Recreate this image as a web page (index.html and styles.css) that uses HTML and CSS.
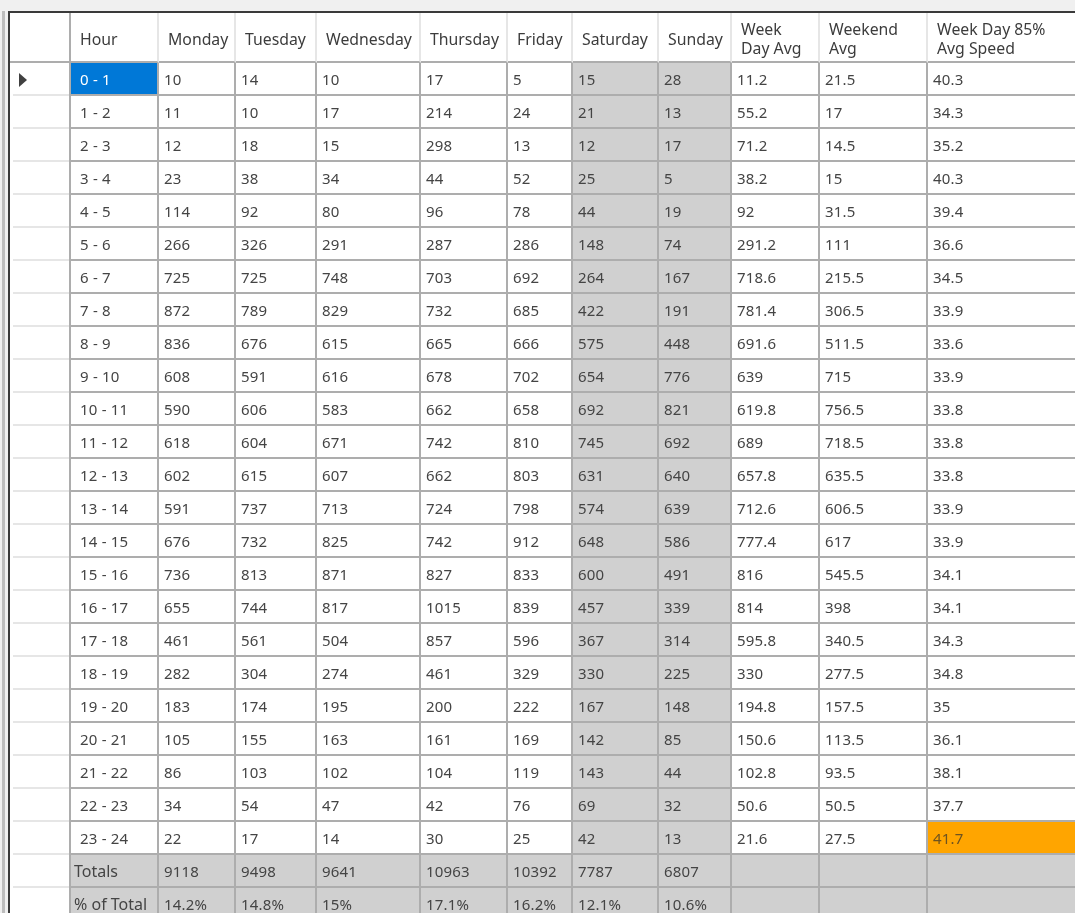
FILE: index.html
```html
<!DOCTYPE html>
<html lang="en">
<head>
<meta charset="utf-8">
<title>Hourly traffic counts</title>
<link rel="stylesheet" href="styles.css">
</head>
<body>
<div class="frame">
<table class="grid">
<colgroup><col class="c0"><col class="c1"><col class="c2"><col class="c3"><col class="c4"><col class="c5"><col class="c6"><col class="c7"><col class="c8"><col class="c9"><col class="c10"><col class="c11"></colgroup>
<thead>
<tr><th class="rh"></th><th class="one">Hour</th><th class="one">Monday</th><th class="one">Tuesday</th><th class="one">Wednesday</th><th class="one">Thursday</th><th class="one">Friday</th><th class="one">Saturday</th><th class="one">Sunday</th><th>Week<br>Day Avg</th><th>Weekend<br>Avg</th><th>Week Day 85%<br>Avg Speed</th></tr>
</thead>
<tbody>
<tr><td class="rh"><svg class="arrow" width="8" height="14" viewBox="0 0 8 14"><path d="M0 0L8 7L0 14Z"/></svg></td><td class="h sel">0 - 1</td><td>10</td><td>14</td><td>10</td><td>17</td><td>5</td><td class="g">15</td><td class="g">28</td><td>11.2</td><td>21.5</td><td>40.3</td></tr>
<tr><td class="rh"></td><td class="h">1 - 2</td><td>11</td><td>10</td><td>17</td><td>214</td><td>24</td><td class="g">21</td><td class="g">13</td><td>55.2</td><td>17</td><td>34.3</td></tr>
<tr><td class="rh"></td><td class="h">2 - 3</td><td>12</td><td>18</td><td>15</td><td>298</td><td>13</td><td class="g">12</td><td class="g">17</td><td>71.2</td><td>14.5</td><td>35.2</td></tr>
<tr><td class="rh"></td><td class="h">3 - 4</td><td>23</td><td>38</td><td>34</td><td>44</td><td>52</td><td class="g">25</td><td class="g">5</td><td>38.2</td><td>15</td><td>40.3</td></tr>
<tr><td class="rh"></td><td class="h">4 - 5</td><td>114</td><td>92</td><td>80</td><td>96</td><td>78</td><td class="g">44</td><td class="g">19</td><td>92</td><td>31.5</td><td>39.4</td></tr>
<tr><td class="rh"></td><td class="h">5 - 6</td><td>266</td><td>326</td><td>291</td><td>287</td><td>286</td><td class="g">148</td><td class="g">74</td><td>291.2</td><td>111</td><td>36.6</td></tr>
<tr><td class="rh"></td><td class="h">6 - 7</td><td>725</td><td>725</td><td>748</td><td>703</td><td>692</td><td class="g">264</td><td class="g">167</td><td>718.6</td><td>215.5</td><td>34.5</td></tr>
<tr><td class="rh"></td><td class="h">7 - 8</td><td>872</td><td>789</td><td>829</td><td>732</td><td>685</td><td class="g">422</td><td class="g">191</td><td>781.4</td><td>306.5</td><td>33.9</td></tr>
<tr><td class="rh"></td><td class="h">8 - 9</td><td>836</td><td>676</td><td>615</td><td>665</td><td>666</td><td class="g">575</td><td class="g">448</td><td>691.6</td><td>511.5</td><td>33.6</td></tr>
<tr><td class="rh"></td><td class="h">9 - 10</td><td>608</td><td>591</td><td>616</td><td>678</td><td>702</td><td class="g">654</td><td class="g">776</td><td>639</td><td>715</td><td>33.9</td></tr>
<tr><td class="rh"></td><td class="h">10 - 11</td><td>590</td><td>606</td><td>583</td><td>662</td><td>658</td><td class="g">692</td><td class="g">821</td><td>619.8</td><td>756.5</td><td>33.8</td></tr>
<tr><td class="rh"></td><td class="h">11 - 12</td><td>618</td><td>604</td><td>671</td><td>742</td><td>810</td><td class="g">745</td><td class="g">692</td><td>689</td><td>718.5</td><td>33.8</td></tr>
<tr><td class="rh"></td><td class="h">12 - 13</td><td>602</td><td>615</td><td>607</td><td>662</td><td>803</td><td class="g">631</td><td class="g">640</td><td>657.8</td><td>635.5</td><td>33.8</td></tr>
<tr><td class="rh"></td><td class="h">13 - 14</td><td>591</td><td>737</td><td>713</td><td>724</td><td>798</td><td class="g">574</td><td class="g">639</td><td>712.6</td><td>606.5</td><td>33.9</td></tr>
<tr><td class="rh"></td><td class="h">14 - 15</td><td>676</td><td>732</td><td>825</td><td>742</td><td>912</td><td class="g">648</td><td class="g">586</td><td>777.4</td><td>617</td><td>33.9</td></tr>
<tr><td class="rh"></td><td class="h">15 - 16</td><td>736</td><td>813</td><td>871</td><td>827</td><td>833</td><td class="g">600</td><td class="g">491</td><td>816</td><td>545.5</td><td>34.1</td></tr>
<tr><td class="rh"></td><td class="h">16 - 17</td><td>655</td><td>744</td><td>817</td><td>1015</td><td>839</td><td class="g">457</td><td class="g">339</td><td>814</td><td>398</td><td>34.1</td></tr>
<tr><td class="rh"></td><td class="h">17 - 18</td><td>461</td><td>561</td><td>504</td><td>857</td><td>596</td><td class="g">367</td><td class="g">314</td><td>595.8</td><td>340.5</td><td>34.3</td></tr>
<tr><td class="rh"></td><td class="h">18 - 19</td><td>282</td><td>304</td><td>274</td><td>461</td><td>329</td><td class="g">330</td><td class="g">225</td><td>330</td><td>277.5</td><td>34.8</td></tr>
<tr><td class="rh"></td><td class="h">19 - 20</td><td>183</td><td>174</td><td>195</td><td>200</td><td>222</td><td class="g">167</td><td class="g">148</td><td>194.8</td><td>157.5</td><td>35</td></tr>
<tr><td class="rh"></td><td class="h">20 - 21</td><td>105</td><td>155</td><td>163</td><td>161</td><td>169</td><td class="g">142</td><td class="g">85</td><td>150.6</td><td>113.5</td><td>36.1</td></tr>
<tr><td class="rh"></td><td class="h">21 - 22</td><td>86</td><td>103</td><td>102</td><td>104</td><td>119</td><td class="g">143</td><td class="g">44</td><td>102.8</td><td>93.5</td><td>38.1</td></tr>
<tr><td class="rh"></td><td class="h">22 - 23</td><td>34</td><td>54</td><td>47</td><td>42</td><td>76</td><td class="g">69</td><td class="g">32</td><td>50.6</td><td>50.5</td><td>37.7</td></tr>
<tr><td class="rh"></td><td class="h">23 - 24</td><td>22</td><td>17</td><td>14</td><td>30</td><td>25</td><td class="g">42</td><td class="g">13</td><td>21.6</td><td>27.5</td><td class="warn">41.7</td></tr>
<tr class="tot"><td class="rh"></td><td>Totals</td><td>9118</td><td>9498</td><td>9641</td><td>10963</td><td>10392</td><td>7787</td><td>6807</td><td></td><td></td><td></td></tr>
<tr class="tot"><td class="rh"></td><td>% of Total</td><td>14.2%</td><td>14.8%</td><td>15%</td><td>17.1%</td><td>16.2%</td><td>12.1%</td><td>10.6%</td><td></td><td></td><td></td></tr>
</tbody>
</table>
</div>
</body>
</html>
```
FILE: styles.css
```css
html, body {
  margin: 0;
  height: 100%;
  overflow: hidden;
  background: #f0f0f0;
}

body {
  padding: 11px 0 0 2px;
  box-sizing: border-box;
  width: 1075px;
  height: 913px;
}

.frame {
  height: 902px;
  border-left: 3px solid #bdbdbd;
  padding-left: 3px;
  overflow: hidden;
}

.grid {
  display: table;
  table-layout: fixed;
  border-collapse: separate;
  border-spacing: 0;
  width: 1067px;
  background: #fff;
  border-top: 2px solid #3a3a3a;
  border-left: 2px solid #3a3a3a;
  font-family: "Noto Sans", "DejaVu Sans", sans-serif;
  font-size: 15px;
  letter-spacing: 0.2px;
  color: #444;
  filter: blur(0.35px);
}

.c0 { width: 61px; }
.c1 { width: 88px; }
.c2 { width: 77px; }
.c3 { width: 81px; }
.c4 { width: 104px; }
.c5 { width: 87px; }
.c6 { width: 65px; }
.c7 { width: 86px; }
.c8 { width: 73px; }
.c9 { width: 88px; }
.c10 { width: 108px; }
.c11 { width: 149px; }

th, td {
  box-sizing: border-box;
  padding: 0 0 0 5px;
  text-align: left;
  font-weight: 400;
  white-space: nowrap;
  overflow: hidden;
  border-right: 2px solid #adadad;
  border-bottom: 2px solid #adadad;
  height: 33px;
}

th {
  height: 50px;
  padding: 3px 0 0 9px;
  font-size: 15.8px;
  line-height: 19px;
  letter-spacing: 0;
  color: #3c3c3c;
  border-right-color: #e6e6e6;
}

th.one {
  padding-top: 5px;
}

th:last-child, td:last-child {
  border-right: 0;
}

.rh,
.tot .rh {
  border-right-color: #adadad;
  border-bottom: 0;
  padding: 0 0 0 9px;
  background: linear-gradient(#e6e6e6, #e6e6e6) 3px 100% / 100% 2px no-repeat #fff;
}

th.rh {
  border-bottom: 2px solid #adadad;
  background: #fff;
}

.h {
  padding-left: 9px;
}

.g,
.tot td:not(.rh) {
  background: #d0d0d0;
}

.tot td:nth-child(2) {
  padding-left: 3px;
  font-size: 16px;
  letter-spacing: 0;
}

.sel {
  background: #0078d7;
  color: #fff;
}

.warn {
  background: #ffa500;
  color: #6d5320;
}

.arrow {
  display: block;
  fill: #404040;
}
```
